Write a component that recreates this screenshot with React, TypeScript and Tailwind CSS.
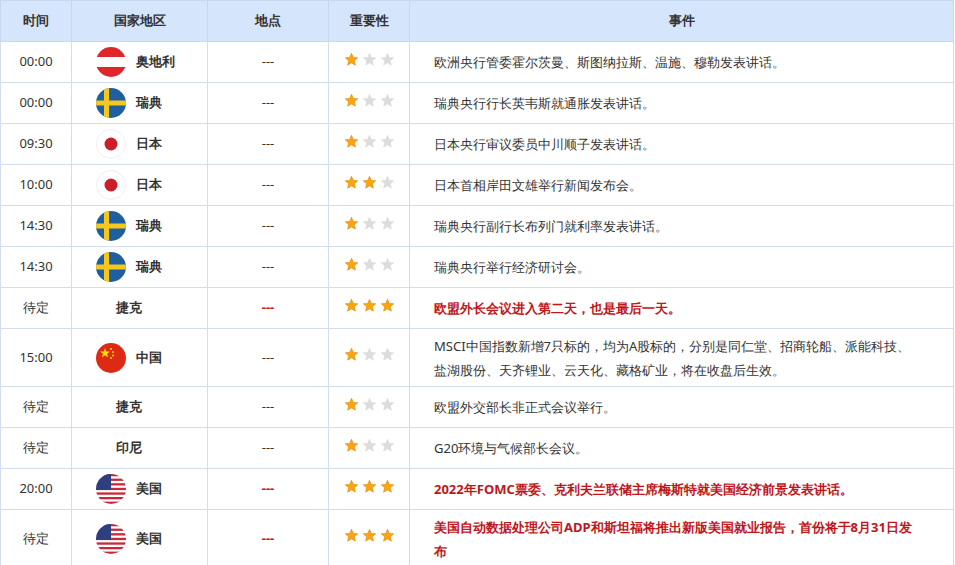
import React from 'react'

type Flag = 'at' | 'se' | 'jp' | 'cn' | 'us' | null

const FlagIcon = ({ f }: { f: Flag }) => {
    if (!f) return <span className="w-[30px] h-[30px] inline-block" />
    return (
        <svg width="30" height="30" viewBox="0 0 30 30" className="shrink-0">
            <defs>
                <clipPath id={`c-${f}`}><circle cx="15" cy="15" r="15" /></clipPath>
            </defs>
            <g clipPath={`url(#c-${f})`}>
                {f === 'at' && (<>
                    <rect width="30" height="30" fill="#fff" />
                    <rect width="30" height="10" fill="#e0262b" />
                    <rect y="20" width="30" height="10" fill="#e0262b" />
                </>)}
                {f === 'se' && (<>
                    <rect width="30" height="30" fill="#1f5fa0" />
                    <rect x="8" width="5" height="30" fill="#f6c81e" />
                    <rect y="12.5" width="30" height="5" fill="#f6c81e" />
                </>)}
                {f === 'jp' && (<>
                    <circle cx="15" cy="15" r="14.5" fill="#fff" stroke="#ececec" strokeWidth="1" />
                    <circle cx="15" cy="15" r="6.5" fill="#cc1d2a" />
                </>)}
                {f === 'cn' && (<>
                    <rect width="30" height="30" fill="#dd2a14" />
                    <polygon points="9,5 10.2,8.6 14,8.6 11,10.8 12.1,14.4 9,12.2 5.9,14.4 7,10.8 4,8.6 7.8,8.6" fill="#ffde00" />
                    <circle cx="15" cy="6" r="1" fill="#ffde00" />
                    <circle cx="17" cy="9" r="1" fill="#ffde00" />
                    <circle cx="17" cy="12.5" r="1" fill="#ffde00" />
                    <circle cx="15" cy="15" r="1" fill="#ffde00" />
                </>)}
                {f === 'us' && (<>
                    <rect width="30" height="30" fill="#fff" />
                    {[0, 1, 2, 3, 4, 5, 6].map(i => (
                        <rect key={i} y={i * 4.6} width="30" height="2.3" fill="#c8283a" />
                    ))}
                    <rect width="15" height="16" fill="#2d3f7f" />
                </>)}
            </g>
        </svg>
    )
}

const Star = ({ on }: { on: boolean }) => (
    <svg width="15" height="15" viewBox="0 0 24 24">
        <polygon
            points="12,2 14.9,8.6 22,9.3 16.6,14 18.2,21 12,17.3 5.8,21 7.4,14 2,9.3 9.1,8.6"
            fill={on ? '#f7a513' : '#dcdcdc'}
            stroke={on ? '#e08a00' : '#dcdcdc'}
            strokeWidth="1"
        />
    </svg>
)

const rows: { t: string; f: Flag; c: string; n: number; e: string; hi?: boolean; h?: string }[] = [
    { t: '00:00', f: 'at', c: '奥地利', n: 1, e: '欧洲央行管委霍尔茨曼、斯图纳拉斯、温施、穆勒发表讲话。' },
    { t: '00:00', f: 'se', c: '瑞典', n: 1, e: '瑞典央行行长英韦斯就通胀发表讲话。' },
    { t: '09:30', f: 'jp', c: '日本', n: 1, e: '日本央行审议委员中川顺子发表讲话。' },
    { t: '10:00', f: 'jp', c: '日本', n: 2, e: '日本首相岸田文雄举行新闻发布会。' },
    { t: '14:30', f: 'se', c: '瑞典', n: 1, e: '瑞典央行副行长布列门就利率发表讲话。' },
    { t: '14:30', f: 'se', c: '瑞典', n: 1, e: '瑞典央行举行经济研讨会。' },
    { t: '待定', f: null, c: '捷克', n: 3, e: '欧盟外长会议进入第二天，也是最后一天。', hi: true },
    { t: '15:00', f: 'cn', c: '中国', n: 1, e: 'MSCI中国指数新增7只标的，均为A股标的，分别是同仁堂、招商轮船、派能科技、盐湖股份、天齐锂业、云天化、藏格矿业，将在收盘后生效。', h: 'h-[58px]' },
    { t: '待定', f: null, c: '捷克', n: 1, e: '欧盟外交部长非正式会议举行。' },
    { t: '待定', f: null, c: '印尼', n: 1, e: 'G20环境与气候部长会议。' },
    { t: '20:00', f: 'us', c: '美国', n: 3, e: '2022年FOMC票委、克利夫兰联储主席梅斯特就美国经济前景发表讲话。', hi: true },
    { t: '待定', f: 'us', c: '美国', n: 3, e: '美国自动数据处理公司ADP和斯坦福将推出新版美国就业报告，首份将于8月31日发布', hi: true, h: 'h-[58px]' },
]

export default function App() {
    return (
        <div className="w-[955px] h-[565px] overflow-hidden bg-white font-['Microsoft_YaHei','Noto_Sans_CJK_SC',sans-serif] text-[13px] text-[#333]">
            <table className="border-collapse table-fixed w-[954px]">
                <colgroup>
                    <col className="w-[71px]" />
                    <col className="w-[136px]" />
                    <col className="w-[121px]" />
                    <col className="w-[81px]" />
                    <col />
                </colgroup>
                <thead>
                    <tr className="h-[41px] bg-[#d5e5fb] font-bold text-[#333]">
                        {['时间', '国家地区', '地点', '重要性', '事件'].map(h => (
                            <th key={h} className="border border-[#c9d8ef] font-bold">{h}</th>
                        ))}
                    </tr>
                </thead>
                <tbody>
                    {rows.map((r, i) => (
                        <tr key={i} className={r.h ?? 'h-[41px]'}>
                            <td className="border border-[#d3ddee] text-center">{r.t}</td>
                            <td className="border border-[#d3ddee]">
                                <div className="flex items-center gap-[10px] pl-[24px] font-bold text-[#333]">
                                    {r.f ? <FlagIcon f={r.f} /> : <span className="w-[10px]" />}
                                    <span>{r.c}</span>
                                </div>
                            </td>
                            <td className={`border border-[#d3ddee] text-center ${r.hi ? 'text-[#c0161a] font-bold' : ''}`}>---</td>
                            <td className="border border-[#d3ddee]">
                                <div className="flex gap-[3px] pl-[15px] pb-[6px]">
                                    {[0, 1, 2].map(k => <Star key={k} on={k < r.n} />)}
                                </div>
                            </td>
                            <td className={`border border-[#d3ddee] pl-[24px] pr-[36px] leading-[24px] ${r.hi ? 'text-[#c0161a] font-bold' : ''}`}>{r.e}</td>
                        </tr>
                    ))}
                </tbody>
            </table>
        </div>
    )
}
